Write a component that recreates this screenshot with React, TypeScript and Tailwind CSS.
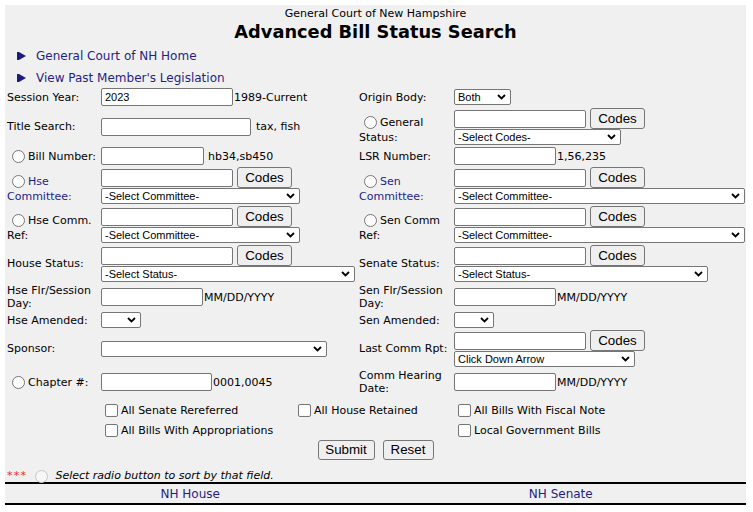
import React from "react";

const VER = "[font-family:'DejaVu_Sans',Verdana,sans-serif]";
const ARI = "[font-family:'Liberation_Sans',Arial,sans-serif]";

function Radio({ disabled }: { disabled?: boolean }) {
  return (
    <input
      type="radio"
      disabled={disabled}
      className={
        disabled
          ? "appearance-none w-[13px] h-[13px] rounded-full border border-[#c6c6c6] bg-[#f7f7f7] ml-[5px] mr-[3px] shrink-0"
          : "appearance-none w-[13px] h-[13px] rounded-full border border-[#767676] bg-white ml-[5px] mr-[3px] shrink-0"
      }
    />
  );
}

function Checkbox() {
  return (
    <input
      type="checkbox"
      className="appearance-none w-[13px] h-[13px] rounded-[2px] border border-[#767676] bg-white ml-[4px] mr-[3px] shrink-0"
    />
  );
}

function TextBox({ className, value }: { className: string; value?: string }) {
  return (
    <input
      type="text"
      defaultValue={value}
      className={`h-[18px] border border-[#767676] rounded-[2px] bg-white px-[3px] text-[11px] text-black ${ARI} ${className}`}
    />
  );
}

function Codes() {
  return (
    <button
      type="button"
      className={`h-[21px] w-[55px] ml-[4px] bg-[#efefef] border border-[#767676] rounded-[3px] text-[13.33px] leading-none text-black ${ARI}`}
    >
      Codes
    </button>
  );
}

function Sel({ className, text }: { className: string; text: string }) {
  return (
    <span className={`relative inline-block h-[16px] ${className}`}>
      <select
        defaultValue={text}
        className={`appearance-none w-full h-full border border-[#767676] rounded-[2px] bg-white pl-[3px] pr-[14px] text-[11px] leading-none text-black ${ARI}`}
      >
        <option value={text}>{text}</option>
      </select>
      <svg
        className="absolute right-[5px] top-[5px] pointer-events-none"
        width="9"
        height="6"
        viewBox="0 0 9 6"
      >
        <path d="M1 1 L4.5 4.5 L8 1" fill="none" stroke="#000" strokeWidth="1.8" />
      </svg>
    </span>
  );
}

function Arrow() {
  return (
    <svg width="9" height="8" viewBox="0 0 9 8" className="shrink-0">
      <path d="M0 0 L2 0 L9 4 L2 8 L0 8 Z" fill="#1c1c7e" />
    </svg>
  );
}

function RadioLabel({ first, second, link }: { first: string; second: string; link?: boolean }) {
  const c = link ? "text-[#1f1f85]" : "";
  return (
    <div className="leading-[13px]">
      <div className="flex items-end h-[19px] whitespace-nowrap">
        <Radio />
        <span className={c}>{first}</span>
      </div>
      <div className={`mt-[2px] ${c}`}>{second}</div>
    </div>
  );
}

function TwoLine({ a, b }: { a: string; b: string }) {
  return (
    <div className="leading-[13px] whitespace-nowrap">
      <div>{a}</div>
      <div>{b}</div>
    </div>
  );
}

function Stack({ inputW, selW, selText }: { inputW: string; selW: string; selText: string }) {
  return (
    <div className="flex flex-col">
      <div className="flex items-center h-[21px]">
        <TextBox className={inputW} />
        <Codes />
      </div>
      <Sel className={selW} text={selText} />
    </div>
  );
}

export default function App() {
  return (
    <div className={`min-h-screen bg-white pt-[5px] pl-[5px] text-black ${VER}`}>
      <div className="w-[741px] bg-[#f0f0f0]">
        <div className="pt-[2px] text-center text-[11px] leading-[14px]">General Court of New Hampshire</div>
        <h1 className="text-center text-[17.8px] leading-[22px] font-bold">Advanced Bill Status Search</h1>

        <div className="pl-[12px] mt-[2px] text-[12px] text-[#1f1f85]">
          <div className="flex items-center h-[22px] gap-[10px]">
            <Arrow />
            <a href="#">General Court of NH Home</a>
          </div>
          <div className="flex items-center h-[21px] gap-[10px]">
            <Arrow />
            <a href="#">View Past Member's Legislation</a>
          </div>
        </div>

        <div className="grid grid-cols-[94px_258px_95px_292px] gap-y-[2px] items-center pl-[2px] text-[11px] leading-[13px]">
          {/* Row 1 */}
          <div className="whitespace-nowrap">Session Year:</div>
          <div className="flex items-center h-[18px]">
            <TextBox className="w-[132px]" value="2023" />
            <span className="ml-[1px]">1989-Current</span>
          </div>
          <div className="whitespace-nowrap">Origin Body:</div>
          <div className="flex items-center">
            <Sel className="w-[57px]" text="Both" />
          </div>

          {/* Row 2 */}
          <div className="whitespace-nowrap">Title Search:</div>
          <div className="flex items-center">
            <TextBox className="w-[150px]" />
            <span className="ml-[5px]">tax, fish</span>
          </div>
          <RadioLabel first="General" second="Status:" />
          <Stack inputW="w-[132px]" selW="w-[167px]" selText="-Select Codes-" />

          {/* Row 3 */}
          <div className="flex items-center h-[16px] whitespace-nowrap">
            <Radio />
            <span>Bill Number:</span>
          </div>
          <div className="flex items-center h-[18px]">
            <TextBox className="w-[103px]" />
            <span className="ml-[4px]">hb34,sb450</span>
          </div>
          <div className="whitespace-nowrap">LSR Number:</div>
          <div className="flex items-center">
            <TextBox className="w-[102px]" />
            <span className="ml-[1px]">1,56,235</span>
          </div>

          {/* Row 4 */}
          <RadioLabel first="Hse" second="Committee:" link />
          <Stack inputW="w-[132px]" selW="w-[199px]" selText="-Select Committee-" />
          <RadioLabel first="Sen" second="Committee:" link />
          <Stack inputW="w-[132px]" selW="w-[291px]" selText="-Select Committee-" />

          {/* Row 5 */}
          <RadioLabel first="Hse Comm." second="Ref:" />
          <Stack inputW="w-[132px]" selW="w-[199px]" selText="-Select Committee-" />
          <RadioLabel first="Sen Comm" second="Ref:" />
          <Stack inputW="w-[132px]" selW="w-[291px]" selText="-Select Committee-" />

          {/* Row 6 */}
          <div className="whitespace-nowrap">House Status:</div>
          <Stack inputW="w-[132px]" selW="w-[254px]" selText="-Select Status-" />
          <div className="whitespace-nowrap">Senate Status:</div>
          <Stack inputW="w-[132px]" selW="w-[254px]" selText="-Select Status-" />

          {/* Row 7 */}
          <TwoLine a="Hse Flr/Session" b="Day:" />
          <div className="flex items-center">
            <TextBox className="w-[102px]" />
            <span className="ml-[1px]">MM/DD/YYYY</span>
          </div>
          <TwoLine a="Sen Flr/Session" b="Day:" />
          <div className="flex items-center">
            <TextBox className="w-[102px]" />
            <span className="ml-[1px]">MM/DD/YYYY</span>
          </div>

          {/* Row 8 */}
          <div className="whitespace-nowrap">Hse Amended:</div>
          <div className="flex items-center">
            <Sel className="w-[40px]" text="" />
          </div>
          <div className="whitespace-nowrap">Sen Amended:</div>
          <div className="flex items-center">
            <Sel className="w-[40px]" text="" />
          </div>

          {/* Row 9 */}
          <div className="whitespace-nowrap">Sponsor:</div>
          <div className="flex items-center">
            <Sel className="w-[226px]" text="" />
          </div>
          <div className="whitespace-nowrap">Last Comm Rpt:</div>
          <Stack inputW="w-[132px]" selW="w-[181px]" selText="Click Down Arrow" />

          {/* Row 10 */}
          <div className="flex items-center h-[16px] whitespace-nowrap">
            <Radio />
            <span>Chapter #:</span>
          </div>
          <div className="flex items-center">
            <TextBox className="w-[111px]" />
            <span className="ml-[1px]">0001,0045</span>
          </div>
          <TwoLine a="Comm Hearing" b="Date:" />
          <div className="flex items-center">
            <TextBox className="w-[102px]" />
            <span className="ml-[1px]">MM/DD/YYYY</span>
          </div>
        </div>

        <div className="mt-[5px] pl-[96px] text-[11px] leading-[13px]">
          <div className="flex h-[21px] items-center">
            <label className="w-[193px] flex items-center whitespace-nowrap">
              <Checkbox />
              All Senate Rereferred
            </label>
            <label className="w-[160px] flex items-center whitespace-nowrap">
              <Checkbox />
              All House Retained
            </label>
            <label className="flex items-center whitespace-nowrap">
              <Checkbox />
              All Bills With Fiscal Note
            </label>
          </div>
          <div className="flex h-[19px] items-center">
            <label className="w-[353px] flex items-center whitespace-nowrap">
              <Checkbox />
              All Bills With Appropriations
            </label>
            <label className="flex items-center whitespace-nowrap">
              <Checkbox />
              Local Government Bills
            </label>
          </div>
        </div>

        <div className="flex justify-center gap-[8px] h-[20px]">
          <button
            type="button"
            className={`h-[20px] w-[57px] bg-[#efefef] border border-[#767676] rounded-[3px] text-[13.33px] leading-none ${ARI}`}
          >
            Submit
          </button>
          <button
            type="button"
            className={`h-[20px] w-[51px] bg-[#efefef] border border-[#767676] rounded-[3px] text-[13.33px] leading-none ${ARI}`}
          >
            Reset
          </button>
        </div>

        <div className="mt-[10px] flex items-center h-[12px] pl-[2px] text-[11px]">
          <span className="text-[#ff1a1a] tracking-[1.3px]">***</span>
          <span className="ml-[3px] flex items-center">
            <Radio disabled />
          </span>
          <span className="ml-[4px] italic">Select radio button to sort by that field.</span>
        </div>

        <div className="border-y-2 border-black flex h-[23px] items-center text-[12px] text-[#1f1f85]">
          <a href="#" className="flex-1 text-center">NH House</a>
          <a href="#" className="flex-1 text-center">NH Senate</a>
        </div>
      </div>
    </div>
  );
}
